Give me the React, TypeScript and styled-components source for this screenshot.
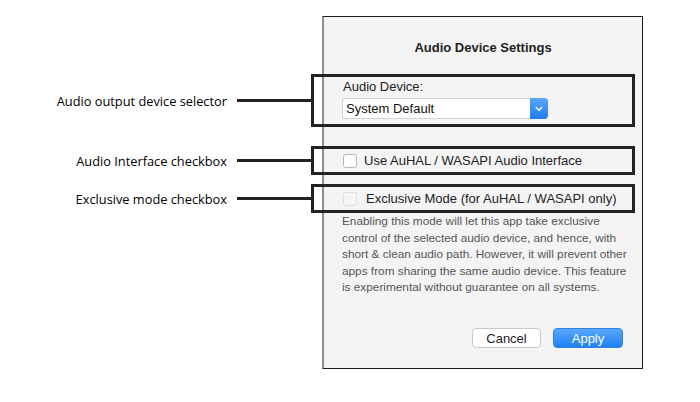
import styled, { createGlobalStyle } from "styled-components";

const GlobalStyle = createGlobalStyle`
  html, body {
    margin: 0;
    padding: 0;
    background: #ffffff;
  }
  body {
    font-family: "Liberation Sans", Arial, sans-serif;
    width: 700px;
    height: 402px;
    overflow: hidden;
  }
`;

function Chevron() {
  return (
    <svg width="8" height="6" viewBox="0 0 8 6">
      <path
        d="M1.2 1.6 L4 4.2 L6.8 1.6"
        fill="none"
        stroke="#ffffff"
        strokeWidth="1.4"
        strokeLinecap="round"
        strokeLinejoin="round"
      />
    </svg>
  );
}

function Annotated({
  label,
  children,
  spacing,
  top,
}: {
  label: string;
  children: React.ReactNode;
  spacing: number;
  top: number;
}) {
  return (
    <CalloutBox $spacing={spacing} $top={top}>
      <Callout>
        <CalloutText>{label}</CalloutText>
        <Leader />
      </Callout>
      {children}
    </CalloutBox>
  );
}

export default function App() {
  return (
    <>
      <GlobalStyle />
      <Page>
        <Dialog>
          <Title>Audio Device Settings</Title>

          <Annotated label="Audio output device selector" spacing={18} top={2}>
            <FieldLabel>Audio Device:</FieldLabel>
            <Select>
              <SelectValue>System Default</SelectValue>
              <Stepper>
                <Chevron />
              </Stepper>
            </Select>
          </Annotated>

          <Annotated label="Audio Interface checkbox" spacing={19} top={0}>
            <CheckRow $gap={7}>
              <Checkbox />
              <CheckLabel>Use AuHAL / WASAPI Audio Interface</CheckLabel>
            </CheckRow>
          </Annotated>

          <Annotated label="Exclusive mode checkbox" spacing={9} top={0}>
            <CheckRow $gap={9}>
              <Checkbox $disabled />
              <CheckLabel>Exclusive Mode (for AuHAL / WASAPI only)</CheckLabel>
            </CheckRow>
          </Annotated>

          <Description>
            Enabling this mode will let this app take exclusive control of the
            selected audio device, and hence, with short &amp; clean audio
            path. However, it will prevent other apps from sharing the same
            audio device. This feature is experimental without guarantee on
            all systems.
          </Description>

          <Footer>
            <Button>Cancel</Button>
            <Button $primary>Apply</Button>
          </Footer>
        </Dialog>
      </Page>
    </>
  );
}

const Page = styled.div`
  display: flex;
  padding: 16px 0 0 322px;
`;

const Dialog = styled.div`
  box-sizing: border-box;
  width: 321px;
  height: 353px;
  display: flex;
  flex-direction: column;
  padding-top: 23px;
  background: #f4f4f4;
  border: 1px solid #1c1c1c;
  border-left: 2px solid #8c8c8c;
`;

const Title = styled.div`
  font-size: 13px;
  line-height: 16px;
  font-weight: bold;
  color: #222;
  text-align: center;
`;

const CalloutBox = styled.div<{ $spacing: number; $top: number }>`
  position: relative;
  box-sizing: border-box;
  width: 324px;
  margin: ${(p) => p.$spacing}px 0 0 -13px;
  padding: ${(p) => p.$top}px 0 5px 28px;
  border: 3px solid #222;
`;

const Callout = styled.div`
  position: absolute;
  right: 100%;
  top: 50%;
  transform: translateY(-50%);
  display: flex;
  align-items: center;
  gap: 10px;
  white-space: nowrap;
`;

const CalloutText = styled.span`
  font-family: "Open Sans", "Liberation Sans", sans-serif;
  font-size: 12.8px;
  color: #000;
`;

const Leader = styled.span`
  display: block;
  width: 77px;
  height: 3px;
  background: #222;
`;

const FieldLabel = styled.div`
  font-size: 13px;
  line-height: 16px;
  color: #222;
  padding-left: 1px;
  margin-bottom: 3px;
`;

const Select = styled.div`
  box-sizing: border-box;
  width: 206px;
  height: 21px;
  display: flex;
  align-items: stretch;
  background: #fff;
  border: 1px solid #d4d4d4;
  border-right: none;
  border-radius: 3px;
`;

const SelectValue = styled.span`
  flex: 1;
  display: flex;
  align-items: center;
  padding-left: 3px;
  font-size: 13px;
  color: #111;
`;

const Stepper = styled.span`
  width: 18px;
  margin: -1px 0;
  display: flex;
  align-items: center;
  justify-content: center;
  background: linear-gradient(#5aa8fb, #1b7cf4);
  border-radius: 0 4px 4px 0;
`;

const CheckRow = styled.label<{ $gap: number }>`
  display: flex;
  align-items: center;
  gap: ${(p) => p.$gap}px;
  height: 23px;
  margin-bottom: -5px;
  padding-left: 1px;
`;

const Checkbox = styled.span<{ $disabled?: boolean }>`
  box-sizing: border-box;
  width: 14px;
  height: 14px;
  border-radius: 3px;
  background: ${(p) => (p.$disabled ? "#f6f6f6" : "#fff")};
  border: 1px solid ${(p) => (p.$disabled ? "#dedede" : "#b8b8b8")};
`;

const CheckLabel = styled.span`
  font-size: 13px;
  color: #222;
`;

const Description = styled.p`
  margin: 0 0 0 18px;
  width: 291px;
  font-size: 11.8px;
  line-height: 16.6px;
  color: #555;
`;

const Footer = styled.div`
  margin-top: auto;
  display: flex;
  justify-content: flex-end;
  gap: 12px;
  padding: 0 19px 20px 0;
`;

const Button = styled.button<{ $primary?: boolean }>`
  box-sizing: border-box;
  width: ${(p) => (p.$primary ? 70 : 69)}px;
  height: 20px;
  padding: 0;
  font-family: "Liberation Sans", Arial, sans-serif;
  font-size: 13px;
  border-radius: 4px;
  color: ${(p) => (p.$primary ? "#fff" : "#222")};
  background: ${(p) =>
    p.$primary ? "linear-gradient(#5aa8fb, #1f7ff3)" : "#fff"};
  border: 1px solid ${(p) => (p.$primary ? "#2d82ee" : "#c8c8c8")};
`;
